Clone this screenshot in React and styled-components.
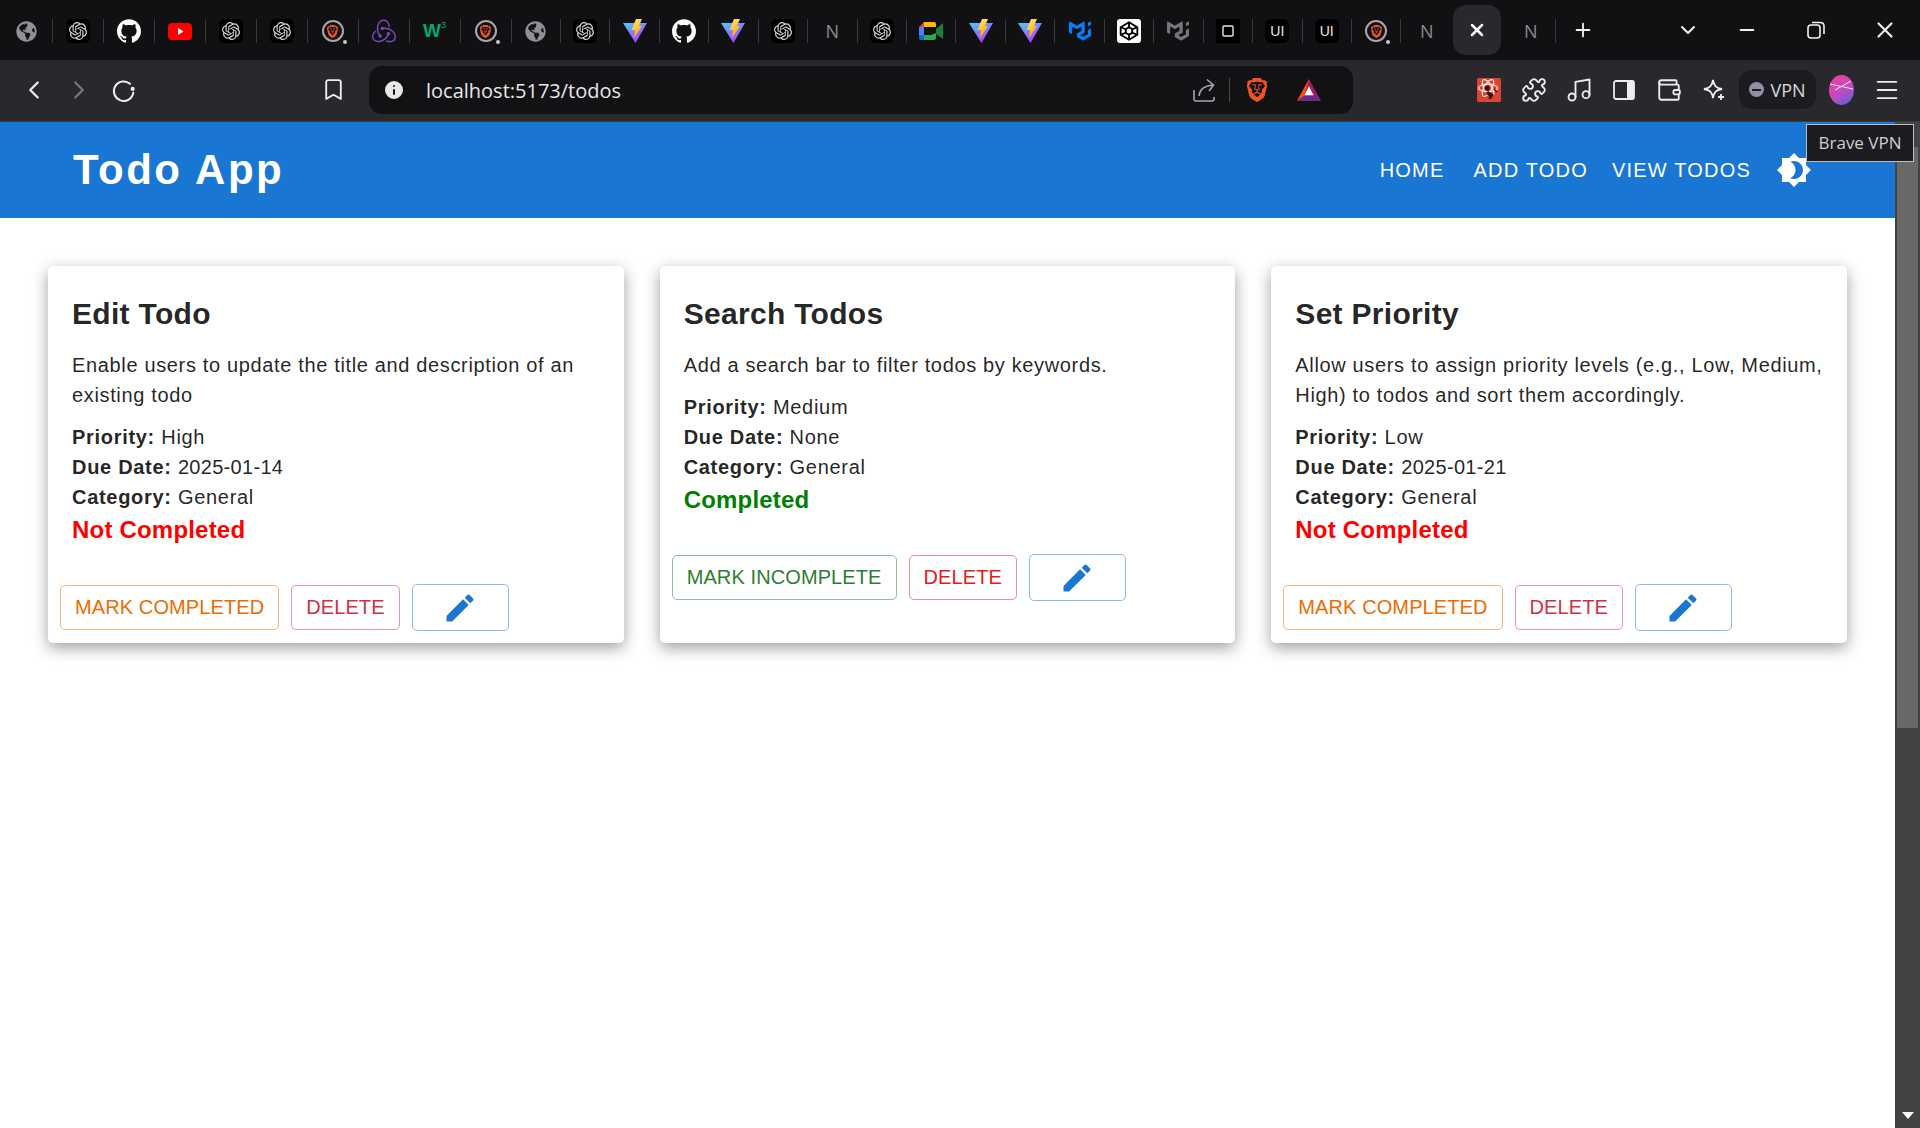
import React from 'react';
import styled, { createGlobalStyle } from 'styled-components';
import { FaGlobeAmericas } from 'react-icons/fa';
import { SiOpenai, SiGithub, SiRedux, SiBrave, SiMui } from 'react-icons/si';
import {
  ChevronLeft,
  ChevronRight,
  ChevronDown,
  Bookmark,
  Puzzle,
  Music,
  Wallet,
  Menu,
  Minus,
  Plus,
  X,
  Info,
} from 'lucide-react';

const GlobalStyle = createGlobalStyle`
  html, body {
    margin: 0;
    padding: 0;
    background: #fff;
    overflow: hidden;
  }
  * {
    box-sizing: border-box;
  }
`;

const Window = styled.div`
  position: relative;
  display: flex;
  flex-direction: column;
  width: 1920px;
  height: 1128px;
  font-family: 'Liberation Sans', Arial, sans-serif;
`;

/* browser chrome */
const TabStrip = styled.div`
  display: flex;
  align-items: center;
  height: 60px;
  padding: 2px 0 0 1.5px;
  background: #111114;
`;

const Tab = styled.div`
  display: flex;
  align-items: center;
  justify-content: center;
  flex: none;
  width: ${({ $width }) => $width || 50}px;
  height: 24px;
  margin-left: ${({ $offset }) => $offset || 0}px;
  border-right: ${({ $bare }) => ($bare ? 'none' : '1px solid #3b3b3f')};
`;

const ActiveTab = styled.div`
  display: flex;
  align-items: center;
  justify-content: center;
  flex: none;
  width: 48px;
  height: 50px;
  margin: -2px 0 0 1px;
  border-radius: 13px;
  background: #28282d;
  color: #fff;
`;

const Favicon = styled.span`
  display: flex;
  align-items: center;
  justify-content: center;
  width: 24px;
  height: 24px;
  margin-left: ${({ $offset }) => $offset || 0}px;
  border-radius: ${({ $radius }) => $radius || 0}px;
  background: ${({ $bg }) => $bg || 'transparent'};
  color: ${({ $color }) => $color || '#fff'};
  font-size: ${({ $size }) => $size || 14}px;
`;

const BraveRing = styled.span`
  position: relative;
  display: flex;
  align-items: center;
  justify-content: center;
  width: 22px;
  height: 22px;
  border: 2px solid #a9a9ad;
  border-radius: 50%;
  color: #f0542a;

  &::after {
    content: '';
    position: absolute;
    right: -5px;
    bottom: -4px;
    width: 4px;
    height: 4px;
    border-radius: 50%;
    background: #c8c8cc;
  }
`;

const LetterFavicon = styled.span`
  color: #8c8c90;
  font-family: 'Open Sans', sans-serif;
  font-size: 18px;
`;

const W3Mark = styled.span`
  display: flex;
  align-items: flex-start;
  color: #04aa6d;
  font-family: 'Liberation Sans', sans-serif;
  font-size: 19px;
  font-weight: 700;
  line-height: 20px;

  sup {
    margin-left: 0;
    font-size: 9px;
    font-weight: 400;
    line-height: 9px;
  }
`;

const StripButton = styled.div`
  display: flex;
  align-items: center;
  justify-content: center;
  flex: none;
  width: ${({ $width }) => $width}px;
  margin: -3px 0 0 ${({ $offset }) => $offset || 0}px;
  color: #f2f2f2;
`;

const Toolbar = styled.div`
  display: flex;
  align-items: center;
  height: 62px;
  padding: 0 10px 2px 11px;
  background: #28282d;
  border-bottom: 1px solid #3a3a3e;
`;

const ToolButton = styled.div`
  display: flex;
  align-items: center;
  justify-content: center;
  flex: none;
  width: 45px;
  height: 40px;
  margin-left: ${({ $offset }) => $offset || 0}px;
  color: ${({ $dim }) => ($dim ? '#77777b' : '#ededee')};
`;

const AddressBar = styled.div`
  display: flex;
  align-items: center;
  flex: none;
  width: 984px;
  height: 48px;
  margin-left: 13px;
  padding: 0 32px 0 13px;
  border-radius: 13px;
  background: #121215;
`;

const UrlText = styled.span`
  margin-left: 20px;
  padding-top: 1px;
  color: #e8e8ea;
  font-family: 'Open Sans', sans-serif;
  font-size: 20px;
`;

const UrlActions = styled.div`
  display: flex;
  align-items: center;
  margin-left: auto;
`;

const UrlDivider = styled.span`
  width: 1px;
  height: 24px;
  margin: 0 15px 0 13px;
  background: #4a4a4e;
`;

const VpnPill = styled.div`
  display: flex;
  align-items: center;
  justify-content: center;
  gap: 6px;
  flex: none;
  width: 77px;
  height: 39px;
  margin-left: 3px;
  border-radius: 13px;
  background: #1c1c20;
  color: #d8d8dc;
  font-family: 'Open Sans', sans-serif;
  font-size: 18px;
`;

const VpnDot = styled.span`
  display: flex;
  align-items: center;
  justify-content: center;
  width: 15px;
  height: 15px;
  border-radius: 50%;
  background: #8f90a6;

  &::before {
    content: '';
    width: 9px;
    height: 2px;
    background: #1c1c20;
  }
`;

const Tooltip = styled.div`
  position: absolute;
  top: 124px;
  left: 1806px;
  width: 108px;
  height: 38px;
  border: 1px solid #bdbdc0;
  background: #1b1b20;
  color: #cfcfd2;
  font-family: 'Open Sans', sans-serif;
  font-size: 17px;
  line-height: 36px;
  text-align: center;
  white-space: nowrap;
`;

/* page */
const Viewport = styled.div`
  display: flex;
  flex: 1;
  min-height: 0;
`;

const Page = styled.main`
  flex: 1;
  min-width: 0;
`;

const ScrollRail = styled.div`
  display: flex;
  flex-direction: column;
  align-items: center;
  flex: none;
  width: 25px;
  padding-top: 25px;
  background: #434343;
`;

const ScrollThumb = styled.div`
  width: 21px;
  height: 581px;
  background: #686868;
`;

const ScrollArrow = styled.div`
  width: 0;
  height: 0;
  margin-top: auto;
  margin-bottom: 9px;
  border-top: 7px solid #fff;
  border-left: 6px solid transparent;
  border-right: 6px solid transparent;
`;

const Header = styled.header`
  display: flex;
  align-items: center;
  justify-content: space-between;
  height: 96px;
  padding: 0 83px 0 73px;
  background: #1976d2;
  color: #fff;
`;

const Brand = styled.h1`
  margin: 0;
  font-size: 42px;
  font-weight: 700;
  letter-spacing: 2.5px;
`;

const Nav = styled.nav`
  display: flex;
  align-items: center;
`;

const NavLink = styled.a`
  margin-left: ${({ $offset }) => $offset || 0}px;
  color: #fff;
  font-size: 20px;
  letter-spacing: 1.2px;
`;

const ThemeButton = styled.span`
  display: flex;
  margin-left: 25px;
`;

const CardGrid = styled.section`
  display: grid;
  grid-template-columns: repeat(3, 1fr);
  gap: 36px;
  padding: 48px 48px 0;
`;

const Card = styled.article`
  display: flex;
  flex-direction: column;
  border-radius: 5px;
  background: #fff;
  box-shadow: 0 5px 16px rgba(0, 0, 0, 0.38);
`;

const CardBody = styled.div`
  padding: 24px;
  color: rgba(0, 0, 0, 0.87);
`;

const CardTitle = styled.h2`
  margin: 0 0 12px;
  font-size: 30px;
  font-weight: 700;
  line-height: 48px;
  letter-spacing: 0.3px;
`;

const Description = styled.p`
  margin: 0 0 12px;
  font-size: 20px;
  line-height: 30px;
  letter-spacing: 0.65px;
`;

const Meta = styled.p`
  margin: 0;
  font-size: 20px;
  line-height: 30px;
  letter-spacing: 0.7px;

  strong {
    font-weight: 700;
  }
`;

const DateValue = styled.span`
  letter-spacing: 0.3px;
`;

const Status = styled.p`
  margin: 0;
  color: ${({ $done }) => ($done ? 'green' : 'red')};
  font-size: 24px;
  font-weight: 700;
  line-height: 36px;
  letter-spacing: 0.2px;
`;

const CardActions = styled.div`
  display: flex;
  align-items: center;
  gap: 12px;
  padding: 12px;
`;

const OutlineButton = styled.button`
  display: inline-flex;
  align-items: center;
  justify-content: center;
  height: ${({ $tall }) => ($tall ? 47 : 45)}px;
  padding: ${({ $tall }) => ($tall ? '0 29.5px' : '0 14px')};
  border: 1px solid ${({ $color }) => $color}80;
  border-radius: 5px;
  background: transparent;
  color: ${({ $color }) => $color};
  font-family: inherit;
  font-size: 20px;
  letter-spacing: 0.1px;
  cursor: pointer;
`;

const VITE = (
  <svg width="24" height="24" viewBox="0 0 24 24">
    <defs>
      <linearGradient id="viteBody" x1="0" y1="0" x2="0.6" y2="1">
        <stop offset="0" stopColor="#41d1ff" />
        <stop offset="1" stopColor="#bd34fe" />
      </linearGradient>
      <linearGradient id="viteBolt" x1="0" y1="0" x2="0.4" y2="1">
        <stop offset="0" stopColor="#ffea83" />
        <stop offset="1" stopColor="#ffa800" />
      </linearGradient>
    </defs>
    <path d="M0 4 L24 4 L12.5 24 Z" fill="url(#viteBody)" />
    <path d="M13 0 L19 0 L16 7 L19 7 L11 19 L12 11 L8.5 11 Z" fill="url(#viteBolt)" />
  </svg>
);

const MEET = (
  <svg width="24" height="24" viewBox="0 0 24 24">
    <path d="M0 8 L5 3 V8 Z" fill="#ea4335" />
    <path d="M0 8 H5 V16 H0 Z" fill="#4285f4" />
    <path d="M5 3 H15 Q17 3 17 5 V8 H12 V8 H5 Z" fill="#fbbc04" />
    <path d="M0 16 H5 V21 H2 Q0 21 0 19 Z" fill="#1967d2" />
    <path d="M5 16 H12 V14 L17 10 V19 Q17 21 15 21 H5 Z" fill="#34a853" />
    <path d="M12 8 H17 V14 L12 16 Z" fill="#111114" />
    <path d="M17 10 L24 4 V20 L17 15 Z" fill="#188038" />
  </svg>
);

const CODEPEN = (
  <svg width="20" height="20" viewBox="0 0 24 24" fill="none" stroke="#000" strokeWidth="2.2">
    <path d="M12 1.5 L22 7.5 V16.5 L12 22.5 L2 16.5 V7.5 Z" />
    <circle cx="12" cy="12" r="4" />
    <path d="M12 1.5 V8 M12 16 V22.5 M2 7.5 L8.5 10 M22 7.5 L15.5 10 M2 16.5 L8.5 14 M22 16.5 L15.5 14" />
  </svg>
);

const YOUTUBE = (
  <svg width="24" height="17" viewBox="0 0 24 17">
    <rect width="24" height="17" rx="4" fill="#f00" />
    <path d="M10 5 L15.5 8.5 L10 12 Z" fill="#fff" />
  </svg>
);

const HOLLOW_SQUARE = (
  <svg width="12" height="12" viewBox="0 0 12 12" fill="none" stroke="#e6e6e6" strokeWidth="1.4">
    <rect x="1" y="1" width="10" height="10" rx="1" />
  </svg>
);

const BOUNTY = (
  <svg width="24" height="24" viewBox="0 0 24 24">
    <rect width="24" height="24" rx="1.5" fill="#d9452f" />
    <g fill="none" stroke="#fbe6e2" strokeWidth="1.2">
      <ellipse cx="11" cy="10" rx="9.5" ry="3.8" />
      <ellipse cx="11" cy="10" rx="9.5" ry="3.8" transform="rotate(60 11 10)" />
      <ellipse cx="11" cy="10" rx="9.5" ry="3.8" transform="rotate(120 11 10)" />
    </g>
    <circle cx="10" cy="10" r="2.6" fill="#3a1510" />
    <path d="M11 13 L17 17 L14 21 L9 15 Z" fill="#3a1510" />
    <path d="M17 11 L20 14 M12 21 L15 17" stroke="#3a1510" strokeWidth="1.4" />
  </svg>
);

const AVATAR = (
  <svg width="25" height="30" viewBox="0 0 25 30">
    <defs>
      <linearGradient id="avatarFill" x1="0.2" y1="0" x2="0.8" y2="1">
        <stop offset="0" stopColor="#f0409c" />
        <stop offset="0.55" stopColor="#c24bc0" />
        <stop offset="1" stopColor="#5d62d8" />
      </linearGradient>
    </defs>
    <ellipse cx="12.5" cy="15" rx="12.5" ry="15" fill="url(#avatarFill)" />
    <path d="M1 9 L24 14 M6 15 L22 6" stroke="#fbe9f5" strokeWidth="1" />
  </svg>
);

const SIDE_PANEL = (
  <svg width="24" height="24" viewBox="0 0 24 24">
    <rect x="2" y="3" width="20" height="18" rx="2" fill="none" stroke="#ededee" strokeWidth="1.8" />
    <rect x="15" y="3" width="7" height="18" fill="#ededee" />
  </svg>
);

const SPARKLE = (
  <svg width="24" height="24" viewBox="0 0 24 24" fill="none" stroke="#ededee" strokeWidth="1.8">
    <path d="M11 2 C12 8 14 10 20 11 C14 12 12 14 11 20 C10 14 8 12 2 11 C8 10 10 8 11 2 Z" />
    <path d="M19 16 V22 M16 19 H22" />
  </svg>
);

const RELOAD = (
  <svg width="26" height="26" viewBox="0 0 24 24" fill="none" stroke="#ededee" strokeWidth="1.9">
    <path d="M17.5 6.2 A9 9 0 1 0 20.6 14.5" strokeLinecap="round" />
    <circle cx="20" cy="11" r="1.9" fill="#ededee" stroke="none" />
  </svg>
);

const SHARE = (
  <svg width="24" height="24" viewBox="0 0 24 24" fill="none" stroke="#a8a8ac" strokeWidth="1.6">
    <path d="M2 12 V21 Q2 23 4 23 H20 Q22 23 22 21 V19" />
    <path d="M7 18 Q8 8 21 7 M15 1.5 L21.5 7 L17 13" />
  </svg>
);

const BAT = (
  <svg width="27" height="26" viewBox="0 0 26 24">
    <path d="M13 0 L26 24 H0 Z" fill="#9e1f63" />
    <path d="M13 0 L0 24 L8 19 Z" fill="#ff5000" />
    <path d="M13 8 L18 18 H8 Z" fill="#fff" />
    <path d="M0 24 L8 18 H18 L26 24 Z" fill="#662d91" />
  </svg>
);

const RESTORE = (
  <svg width="18" height="18" viewBox="0 0 18 18" fill="none" stroke="#f2f2f2" strokeWidth="1.6">
    <rect x="1" y="4" width="12" height="13" rx="3" />
    <path d="M5 1.5 H13 Q17 1.5 17 5 V13" />
  </svg>
);

const faviconOf = {
  globe: <Favicon $color="#8e9197"><FaGlobeAmericas size={21} /></Favicon>,
  openai: <Favicon $bg="#000" $radius={5} $color="#d6d6d6"><SiOpenai size={18} /></Favicon>,
  github: <Favicon><SiGithub size={24} /></Favicon>,
  youtube: <Favicon>{YOUTUBE}</Favicon>,
  brave: <BraveRing><SiBrave size={13} /></BraveRing>,
  redux: <Favicon $color="#764abc"><SiRedux size={24} /></Favicon>,
  w3: <W3Mark>W<sup>3</sup></W3Mark>,
  vite: <Favicon>{VITE}</Favicon>,
  n: <LetterFavicon>N</LetterFavicon>,
  meet: <Favicon>{MEET}</Favicon>,
  mui: <Favicon $color="#007fff"><SiMui size={22} /></Favicon>,
  muiGrey: <Favicon $color="#77777b"><SiMui size={22} /></Favicon>,
  codepen: <Favicon $bg="#fff" $radius={3}>{CODEPEN}</Favicon>,
  square: <Favicon $bg="#000">{HOLLOW_SQUARE}</Favicon>,
  ui: <Favicon $bg="#000" $radius={6} $color="#e6e6e6">UI</Favicon>,
};

const TABS = [
  'globe', 'openai', 'github', 'youtube', 'openai', 'openai', 'brave', 'redux', 'w3', 'brave',
  'globe', 'openai', 'vite', 'github', 'vite', 'openai', 'n', 'openai', 'meet', 'vite',
  'vite', 'mui', 'codepen', 'muiGrey', 'square', 'ui', 'ui', 'brave',
];

const TODOS = [
  {
    title: 'Edit Todo',
    description: 'Enable users to update the title and description of an existing todo',
    priority: 'High',
    due: '2025-01-14',
    done: false,
    deleteColor: '#d22f45',
  },
  {
    title: 'Search Todos',
    description: 'Add a search bar to filter todos by keywords.',
    priority: 'Medium',
    due: null,
    done: true,
    deleteColor: '#e02020',
  },
  {
    title: 'Set Priority',
    description:
      'Allow users to assign priority levels (e.g., Low, Medium, High) to todos and sort them accordingly.',
    priority: 'Low',
    due: '2025-01-21',
    done: false,
    deleteColor: '#d22f45',
  },
];

const TodoCard = ({ todo }) => (
  <Card>
    <CardBody>
      <CardTitle>{todo.title}</CardTitle>
      <Description>{todo.description}</Description>
      <Meta><strong>Priority:</strong> {todo.priority}</Meta>
      <Meta><strong>Due Date:</strong> {todo.due ? <DateValue>{todo.due}</DateValue> : 'None'}</Meta>
      <Meta><strong>Category:</strong> General</Meta>
      <Status $done={todo.done}>{todo.done ? 'Completed' : 'Not Completed'}</Status>
    </CardBody>
    <CardActions>
      <OutlineButton $color={todo.done ? '#2e7d32' : '#ed6c02'}>
        {todo.done ? 'MARK INCOMPLETE' : 'MARK COMPLETED'}
      </OutlineButton>
      <OutlineButton $color={todo.deleteColor}>DELETE</OutlineButton>
      <OutlineButton $color="#1976d2" $tall>
        <svg width="36" height="36" viewBox="0 0 24 24" fill="#1976d2">
          <path d="M3 17.25V21h3.75L17.81 9.94l-3.75-3.75L3 17.25zM20.71 7.04c.39-.39.39-1.02 0-1.41l-2.34-2.34a.9959.9959 0 0 0-1.41 0l-1.83 1.83 3.75 3.75 1.83-1.83z" />
        </svg>
      </OutlineButton>
    </CardActions>
  </Card>
);

const App = () => (
  <Window>
    <GlobalStyle />
    <TabStrip>
      {TABS.map((name, i) => (
        <Tab key={i} $width={i < 10 ? 51 : 49.44}>{faviconOf[name]}</Tab>
      ))}
      <Tab $bare $width={51}>{faviconOf.n}</Tab>
      <ActiveTab><X size={20} strokeWidth={3} /></ActiveTab>
      <Tab $offset={5}>{faviconOf.n}</Tab>
      <StripButton $width={28} $offset={13}><Plus size={22} /></StripButton>
      <StripButton $width={40} $offset={71}><ChevronDown size={24} /></StripButton>
      <StripButton $width={68} $offset={5}><Minus size={22} /></StripButton>
      <StripButton $width={69}>{RESTORE}</StripButton>
      <StripButton $width={69}><X size={26} /></StripButton>
    </TabStrip>

    <Toolbar>
      <ToolButton><ChevronLeft size={30} strokeWidth={1.8} /></ToolButton>
      <ToolButton $dim><ChevronRight size={30} strokeWidth={1.8} /></ToolButton>
      <ToolButton>{RELOAD}</ToolButton>
      <ToolButton $offset={165}><Bookmark size={25} strokeWidth={1.8} /></ToolButton>
      <AddressBar>
        <Info size={24} fill="#e8e8ea" color="#121215" />
        <UrlText>localhost:5173/todos</UrlText>
        <UrlActions>
          {SHARE}
          <UrlDivider />
          <Favicon $color="#f1541f"><SiBrave size={28} /></Favicon>
          <Favicon $offset={28}>{BAT}</Favicon>
        </UrlActions>
      </AddressBar>
      <ToolButton $offset={113}>{BOUNTY}</ToolButton>
      <ToolButton><Puzzle size={26} strokeWidth={1.7} /></ToolButton>
      <ToolButton><Music size={28} strokeWidth={1.6} /></ToolButton>
      <ToolButton>{SIDE_PANEL}</ToolButton>
      <ToolButton><Wallet size={26} strokeWidth={1.7} /></ToolButton>
      <ToolButton>{SPARKLE}</ToolButton>
      <VpnPill><VpnDot />VPN</VpnPill>
      <ToolButton $offset={3}>{AVATAR}</ToolButton>
      <ToolButton><Menu size={28} strokeWidth={1.6} /></ToolButton>
    </Toolbar>

    <Viewport>
      <Page>
        <Header>
          <Brand>Todo App</Brand>
          <Nav>
            <NavLink>HOME</NavLink>
            <NavLink $offset={29}>ADD TODO</NavLink>
            <NavLink $offset={24}>VIEW TODOS</NavLink>
            <ThemeButton>
              <svg width="36" height="36" viewBox="0 0 24 24" fill="#fff">
                <path d="M20 8.69V4h-4.69L12 .69 8.69 4H4v4.69L.69 12 4 15.31V20h4.69L12 23.31 15.31 20H20v-4.69L23.31 12 20 8.69zM12 18c-.89 0-1.74-.2-2.5-.55C11.56 16.5 13 14.42 13 12s-1.44-4.5-3.5-5.45C10.26 6.2 11.11 6 12 6c3.31 0 6 2.69 6 6s-2.69 6-6 6z" />
              </svg>
            </ThemeButton>
          </Nav>
        </Header>
        <CardGrid>
          {TODOS.map((todo) => (
            <TodoCard key={todo.title} todo={todo} />
          ))}
        </CardGrid>
      </Page>
      <ScrollRail>
        <ScrollThumb />
        <ScrollArrow />
      </ScrollRail>
    </Viewport>

    <Tooltip>Brave VPN</Tooltip>
  </Window>
);

export default App;
